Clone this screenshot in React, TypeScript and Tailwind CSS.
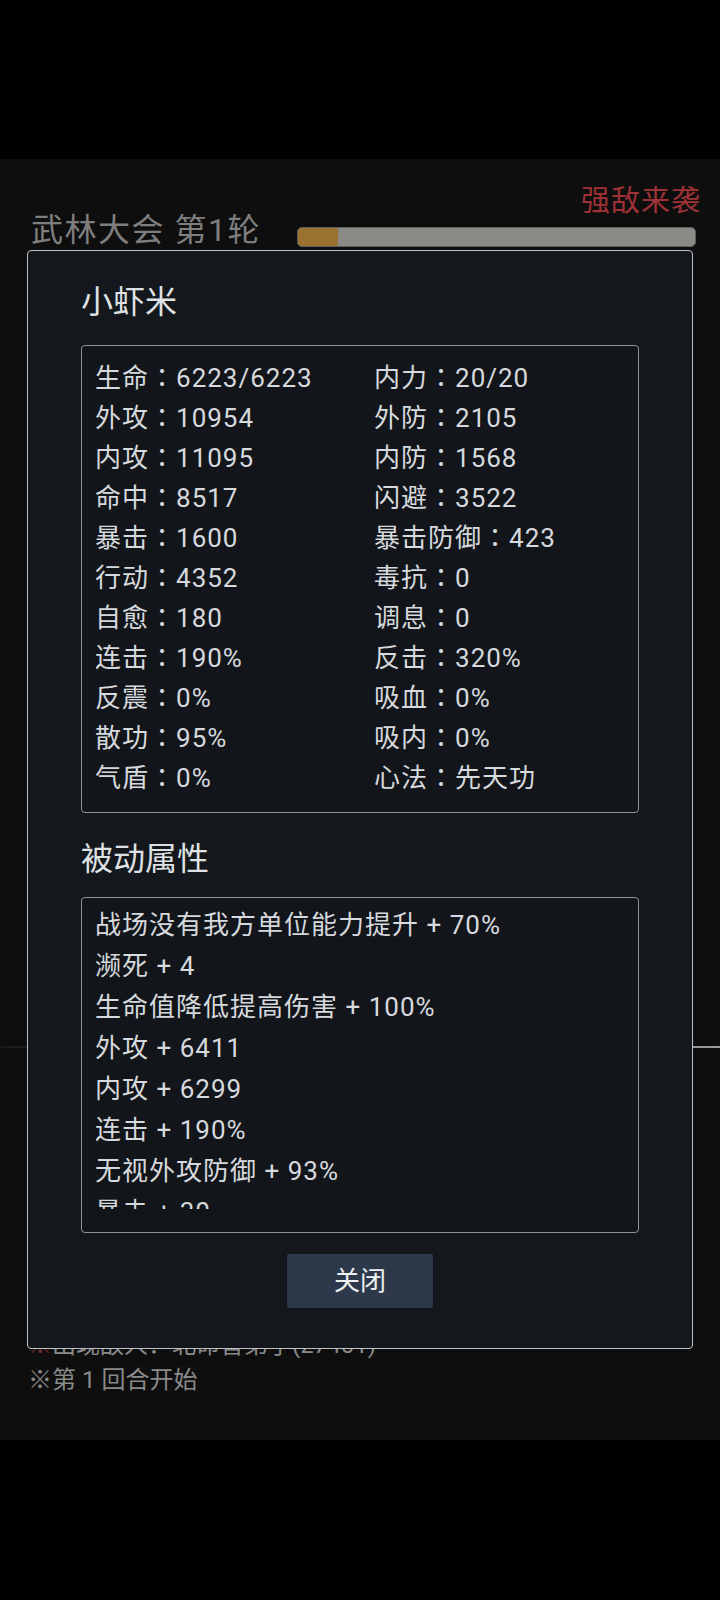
import React from 'react';

const stats: [string, string][] = [
  ['生命：6223/6223', '内力：20/20'],
  ['外攻：10954', '外防：2105'],
  ['内攻：11095', '内防：1568'],
  ['命中：8517', '闪避：3522'],
  ['暴击：1600', '暴击防御：423'],
  ['行动：4352', '毒抗：0'],
  ['自愈：180', '调息：0'],
  ['连击：190%', '反击：320%'],
  ['反震：0%', '吸血：0%'],
  ['散功：95%', '吸内：0%'],
  ['气盾：0%', '心法：先天功'],
];

const passives = [
  '战场没有我方单位能力提升 + 70%',
  '濒死 + 4',
  '生命值降低提高伤害 + 100%',
  '外攻 + 6411',
  '内攻 + 6299',
  '连击 + 190%',
  '无视外攻防御 + 93%',
  '暴击 + 30',
];

// the game font centres the full-width colon, so draw it with the TC face
function Stat({ text }: { text: string }) {
  const [label, value] = text.split('：');
  return (
    <span className="h-[40px]">
      {label}
      <span style={{ fontFamily: '"Noto Sans CJK TC", sans-serif' }}>：</span>
      {value}
    </span>
  );
}

export default function App() {
  return (
    <div
      className="flex flex-col w-[720px] h-[1600px] bg-black overflow-hidden"
      style={{ fontFamily: 'Roboto, "Noto Sans CJK SC", sans-serif' }}
    >
      <div className="h-[159px] shrink-0" />

      <div className="relative flex flex-col h-[1281px] shrink-0 bg-[#0e0e0e]">
        {/* header */}
        <div className="flex items-end pt-[25px] pl-[31px] pr-[24px]">
          <span className="text-[32px] leading-[40px] tracking-[1.5px] text-[#7e7e7e] whitespace-nowrap">武林大会 第1轮</span>
          <div className="flex flex-1 flex-col items-end">
            <span className="text-[29px] leading-[34px] tracking-[1px] text-[#9e3236] mr-[-5px]">强敌来袭</span>
            <div className="mt-[9px] mb-[3px] w-[399px] h-[20px] rounded-[5px] border border-[#5f5f5c] bg-[#8a8a86] overflow-hidden flex">
              <div className="w-[10%] h-full bg-[#9a7332]" />
            </div>
          </div>
        </div>

        {/* divider behind modal */}
        <div className="mt-[796px] h-[2px] bg-gradient-to-r from-[#1a1a1a] via-[#555555] to-[#9a9a9a]" />

        {/* log */}
        <div className="mt-[280px] pl-[28px] text-[24px] leading-[35px] text-[#8a8a8a]">
          <div className="h-[35px] whitespace-nowrap">
            <span className="text-[#7a2a2a]">※</span>出现敌人：北命音弟子(27401)
          </div>
          <div className="h-[35px] whitespace-nowrap">※第 1 回合开始</div>
        </div>

        {/* modal */}
        <div className="absolute left-[27px] top-[91px] w-[666px] h-[1099px] flex flex-col px-[53px] pt-[31px] bg-[#14181d] border border-[#bcc1c6] rounded-[4px]">
          <div className="h-[40px] text-[32px] leading-[40px] text-[#dfe2e5]">小虾米</div>

          <div className="mt-[23px] border border-[#8e9297] rounded-[4px] bg-[#12161b] pt-[10px] pb-[16px] pl-[13px]">
            {stats.map(([a, b]) => (
              <div key={a} className="grid grid-cols-[279px_1fr] h-[40px] text-[26px] leading-[40px] tracking-[1px] text-[#d6d9dd] whitespace-nowrap">
                <Stat text={a} />
                <Stat text={b} />
              </div>
            ))}
          </div>

          <div className="mt-[26px] h-[40px] text-[32px] leading-[40px] text-[#dfe2e5]">被动属性</div>

          <div className="mt-[18px] h-[336px] shrink-0 border border-[#8e9297] rounded-[4px] bg-[#12161b] pt-[7px] pl-[13px]">
            <div className="h-[304px] overflow-hidden">
              {passives.map((p) => (
                <div key={p} className="h-[41px] text-[26px] leading-[41px] tracking-[1px] text-[#d6d9dd] whitespace-nowrap">
                  {p}
                </div>
              ))}
            </div>
          </div>

          <button className="mt-[21px] self-center w-[146px] h-[54px] shrink-0 bg-[#2d394a] text-[26px] text-[#eef0f2] rounded-[2px]">
            关闭
          </button>
        </div>
      </div>
    </div>
  );
}
